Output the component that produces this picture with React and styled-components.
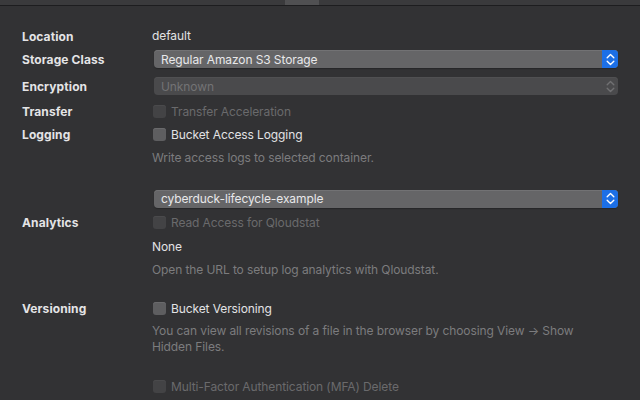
import React from "react";
import styled, { createGlobalStyle } from "styled-components";

const Global = createGlobalStyle`
  html, body { margin: 0; padding: 0; background: #323234; }
  body { width: 640px; height: 400px; overflow: hidden; font-family: Inter, "Noto Sans", "Liberation Sans", sans-serif; -webkit-font-smoothing: antialiased; }
`;

const Page = styled.div`
  width: 640px;
  height: 400px;
  background: #323234;
  display: flex;
  flex-direction: column;
`;

const TabStrip = styled.div`
  height: 5px;
  background: #3a3a3c;
  border-bottom: 1px solid #1d1d1f;
  display: flex;
  padding-left: 285px;
`;

const TabSegment = styled.div`
  width: 34px;
  background: #505052;
`;

const Form = styled.div`
  display: flex;
  flex-direction: column;
  padding: 20px 0 0 22px;
`;

const Row = styled.div`
  display: grid;
  grid-template-columns: 130px 466px;
  align-items: center;
  height: ${(p) => p.$h}px;
  margin-top: ${(p) => p.$mt || 0}px;
`;

const Label = styled.div`
  font-size: 12px;
  font-weight: 700;
  color: #e4e4e6;
  letter-spacing: 0.1px;
`;

const Value = styled.div`
  font-size: 12px;
  letter-spacing: -0.1px;
  color: ${(p) => (p.$dim ? "#7c7c7e" : "#e2e2e4")};
  line-height: ${(p) => (p.$lh ? p.$lh + "px" : "normal")};
  margin-top: ${(p) => (p.$up ? -p.$up : 0)}px;
`;

const Popup = styled.div`
  height: 18px;
  margin-left: 2px;
  border-radius: 4px;
  background: ${(p) => (p.$disabled ? "#4a4a4c" : "#656567")};
  box-shadow: ${(p) => (p.$disabled ? "inset 0 1px 0 #505052" : "inset 0 1px 0 #727274, 0 1px 1px #262628")};
  display: flex;
  align-items: center;
  overflow: hidden;
`;

const PopupText = styled.div`
  flex: 1;
  padding-left: 7px;
  font-size: 12px;
  letter-spacing: -0.1px;
  color: ${(p) => (p.$disabled ? "#737375" : "#e8e8ea")};
`;

const Stepper = styled.div`
  width: 16px;
  height: 100%;
  display: flex;
  align-items: center;
  justify-content: center;
  background: ${(p) => (p.$disabled ? "transparent" : "#1c6fe6")};
`;

const CheckRow = styled.label`
  display: flex;
  align-items: center;
  gap: 5px;
  margin-left: 1px;
`;

const Box = styled.span`
  width: 13px;
  height: 13px;
  border-radius: 3px;
  background: ${(p) => (p.$disabled ? "#434345" : "#5e5e60")};
  box-shadow: ${(p) => (p.$disabled ? "inset 0 1px 0 #4a4a4c" : "inset 0 1px 0 #6a6a6c")};
  flex: none;
`;

const CheckText = styled.span`
  font-size: 12px;
  letter-spacing: -0.1px;
  color: ${(p) => (p.$disabled ? "#6a6a6c" : "#e2e2e4")};
`;

function Chevrons({ color }) {
  return (
    <svg width="9" height="13" viewBox="0 0 9 13">
      <path d="M1.2 4.8 L4.5 1.6 L7.8 4.8" fill="none" stroke={color} strokeWidth="1.4" strokeLinecap="round" strokeLinejoin="round" />
      <path d="M1.2 8.2 L4.5 11.4 L7.8 8.2" fill="none" stroke={color} strokeWidth="1.4" strokeLinecap="round" strokeLinejoin="round" />
    </svg>
  );
}

function Select({ text, disabled }) {
  return (
    <Popup $disabled={disabled}>
      <PopupText $disabled={disabled}>{text}</PopupText>
      <Stepper $disabled={disabled}>
        <Chevrons color={disabled ? "#707072" : "#ffffff"} />
      </Stepper>
    </Popup>
  );
}

function Check({ text, disabled }) {
  return (
    <CheckRow>
      <Box $disabled={disabled} />
      <CheckText $disabled={disabled}>{text}</CheckText>
    </CheckRow>
  );
}

export default function App() {
  return (
    <Page>
      <Global />
      <TabStrip>
        <TabSegment />
      </TabStrip>
      <Form>
        <Row $h={20}>
          <Label>Location</Label>
          <Value $up={2}>default</Value>
        </Row>
        <Row $h={26}>
          <Label>Storage Class</Label>
          <Select text="Regular Amazon S3 Storage" />
        </Row>
        <Row $h={28}>
          <Label>Encryption</Label>
          <Select text="Unknown" disabled />
        </Row>
        <Row $h={23}>
          <Label>Transfer</Label>
          <Check text="Transfer Acceleration" disabled />
        </Row>
        <Row $h={23}>
          <Label>Logging</Label>
          <Check text="Bucket Access Logging" />
        </Row>
        <Row $h={22}>
          <span />
          <Value $dim>Write access logs to selected container.</Value>
        </Row>
        <Row $h={21} $mt={20}>
          <span />
          <Select text="cyberduck-lifecycle-example" />
        </Row>
        <Row $h={26}>
          <Label>Analytics</Label>
          <Check text="Read Access for Qloudstat" disabled />
        </Row>
        <Row $h={22}>
          <span />
          <Value>None</Value>
        </Row>
        <Row $h={24}>
          <span />
          <Value $dim>Open the URL to setup log analytics with Qloudstat.</Value>
        </Row>
        <Row $h={22} $mt={16}>
          <Label>Versioning</Label>
          <Check text="Bucket Versioning" />
        </Row>
        <Row $h={40}>
          <span />
          <Value $dim $lh={16}>
            You can view all revisions of a file in the browser by choosing View → Show
            <br />
            Hidden Files.
          </Value>
        </Row>
        <Row $h={22} $mt={16}>
          <span />
          <Check text="Multi-Factor Authentication (MFA) Delete" disabled />
        </Row>
      </Form>
    </Page>
  );
}
